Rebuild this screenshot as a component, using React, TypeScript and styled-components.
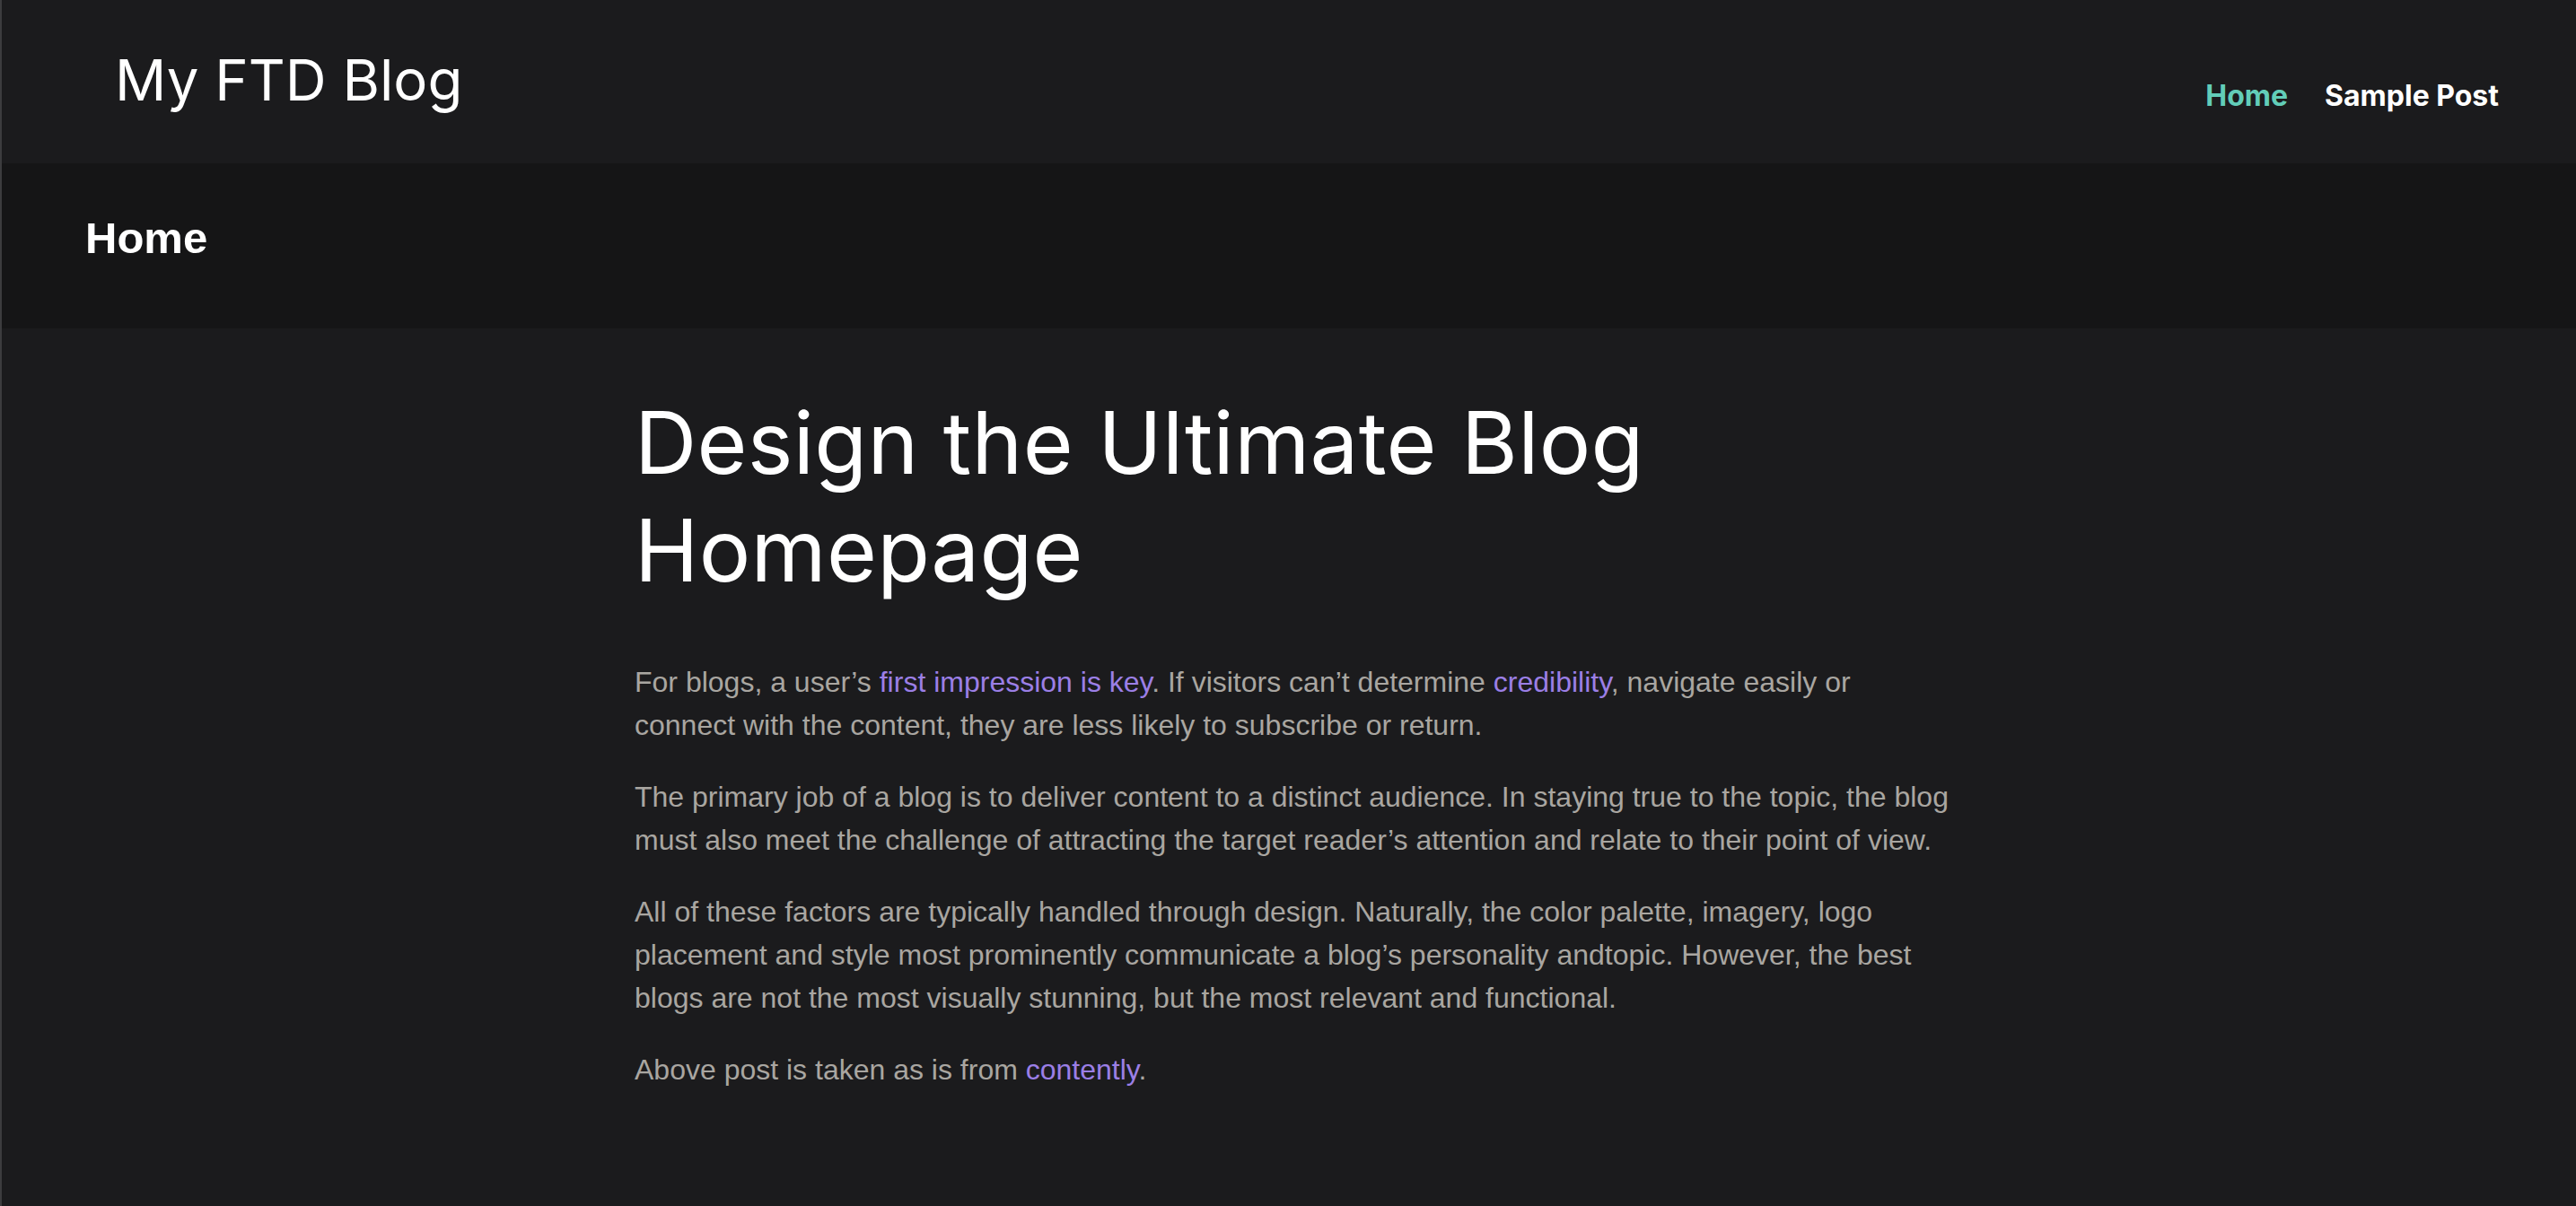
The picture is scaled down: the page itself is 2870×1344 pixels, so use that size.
import React from "react";
import styled, { createGlobalStyle } from "styled-components";

const GlobalStyle = createGlobalStyle`
  html, body {
    margin: 0;
    padding: 0;
    background: #1b1b1d;
  }
  * { box-sizing: border-box; }
`;

const Page = styled.div`
  min-height: 1344px;
  background: #1b1b1d;
  border-left: 2px solid #3c3c3e;
  display: flex;
  flex-direction: column;
`;

const Header = styled.header`
  height: 182px;
  background: #1b1b1d;
  display: flex;
  justify-content: space-between;
  align-items: flex-start;
  padding: 0 86px 0 126px;
`;

const Logo = styled.a`
  font-family: Inter, "Noto Sans", sans-serif;
  font-weight: 400;
  font-size: 63.5px;
  line-height: 64px;
  color: #ffffff;
  text-decoration: none;
  margin-top: 57px;
`;

const Nav = styled.nav`
  display: flex;
  gap: 41px;
  margin-top: 91px;
`;

const NavLink = styled.a<{ $active?: boolean }>`
  font-family: Inter, "Noto Sans", sans-serif;
  font-weight: 700;
  font-size: 32px;
  line-height: 32px;
  color: ${(p) => (p.$active ? "#62cdb8" : "#ffffff")};
  text-decoration: none;
`;

const SubHeader = styled.div`
  height: 184px;
  background: #151516;
  padding: 59px 0 0 93px;
`;

const PageTitle = styled.h2`
  margin: 0;
  font-family: "Liberation Sans", Arial, sans-serif;
  font-weight: 700;
  font-size: 49px;
  line-height: 49px;
  color: #ffffff;
`;

const Main = styled.main`
  flex: 1;
  background: #1b1b1d;
  padding: 67px 0 80px 705px;
`;

const Article = styled.article`
  width: 1468px;
`;

const Title = styled.h1`
  margin: 0 0 63px 0;
  font-family: Inter, "Noto Sans", sans-serif;
  font-weight: 400;
  font-size: 96px;
  line-height: 120px;
  letter-spacing: 0.3px;
  color: #ffffff;
`;

const Paragraph = styled.p`
  margin: 0 0 32px 0;
  font-family: "Liberation Sans", Arial, Helvetica, sans-serif;
  font-size: 32px;
  line-height: 48px;
  color: #a9a6a1;
`;

const Link = styled.a`
  color: #9b7fe6;
  text-decoration: none;
`;

export default function App() {
  return (
    <>
      <GlobalStyle />
      <Page>
        <Header>
          <Logo href="#">My FTD Blog</Logo>
          <Nav>
            <NavLink href="#" $active>
              Home
            </NavLink>
            <NavLink href="#">Sample Post</NavLink>
          </Nav>
        </Header>
        <SubHeader>
          <PageTitle>Home</PageTitle>
        </SubHeader>
        <Main>
          <Article>
            <Title>Design the Ultimate Blog Homepage</Title>
            <Paragraph>
              For blogs, a user’s <Link href="#">first impression is key</Link>. If visitors
              can’t determine <Link href="#">credibility</Link>, navigate easily or connect with
              the content, they are less likely to subscribe or return.
            </Paragraph>
            <Paragraph>
              The primary job of a blog is to deliver content to a distinct audience. In staying
              true to the topic, the blog must also meet the challenge of attracting the target
              reader’s attention and relate to their point of view.
            </Paragraph>
            <Paragraph>
              All of these factors are typically handled through design. Naturally, the color
              palette, imagery, logo placement and style most prominently communicate a blog’s
              personality andtopic. However, the best blogs are not the most visually stunning,
              but the most relevant and functional.
            </Paragraph>
            <Paragraph>
              Above post is taken as is from <Link href="#">contently</Link>.
            </Paragraph>
          </Article>
        </Main>
      </Page>
    </>
  );
}
